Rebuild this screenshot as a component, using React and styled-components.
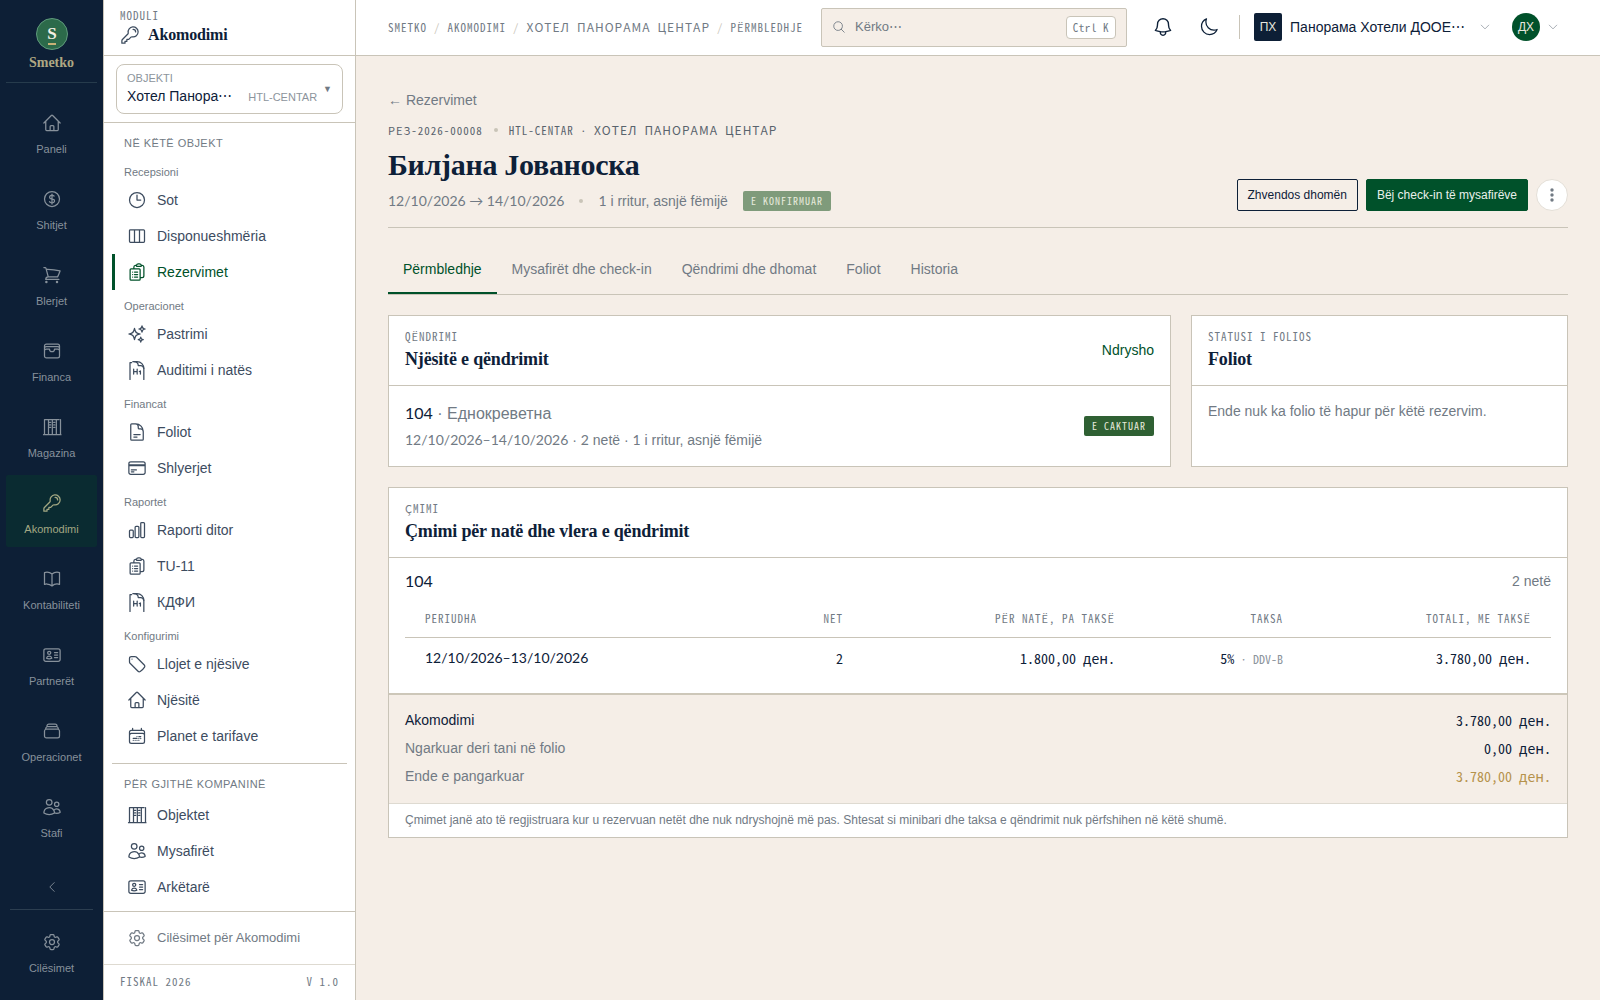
import React, { useState } from 'react';
import styled, { createGlobalStyle, css } from 'styled-components';
import {
  HiOutlineHome,
  HiOutlineCurrencyDollar,
  HiOutlineShoppingCart,
  HiOutlineWallet,
  HiOutlineKey,
  HiOutlineBookOpen,
  HiOutlineIdentification,
  HiOutlineRectangleStack,
  HiOutlineUsers,
  HiOutlineCog6Tooth,
  HiOutlineClock,
  HiOutlineViewColumns,
  HiOutlineClipboardDocumentList,
  HiOutlineSparkles,
  HiOutlineDocumentText,
  HiOutlineCreditCard,
  HiOutlineChartBar,
  HiOutlineTag,
  HiOutlineCalendarDateRange,
  HiOutlineBell,
  HiOutlineMoon,
  HiOutlineMagnifyingGlass,
  HiOutlineChevronDown,
  HiOutlineChevronLeft,
} from 'react-icons/hi2';

const sans = "'Liberation Sans', Arial, sans-serif";
const digits = "Lato, 'Liberation Sans', Arial, sans-serif";
const serif = "'Liberation Serif', 'Times New Roman', serif";
const mono = "'Noto Sans Mono CJK JP', 'Liberation Mono', monospace";

const color = {
  navy: '#0d2038',
  slate: '#3d4c5f',
  grey: '#717a84',
  pale: '#8c949c',
  line: '#c9c4b8',
  sand: '#f5eee7',
  green: '#00512a',
  gold: '#b5924c',
};

const GlobalStyle = createGlobalStyle`
  * {
    box-sizing: border-box;
  }

  body {
    margin: 0;
    background: ${color.sand};
    color: ${color.navy};
    font-family: ${sans};
    font-size: 14px;
    line-height: 20px;
  }

  h1, h2, p {
    margin: 0;
  }

  a {
    color: inherit;
    text-decoration: none;
  }

  button, input {
    font: inherit;
    color: inherit;
  }

  svg {
    display: block;
    flex: none;
  }
`;

// LAYOUT //
const Shell = styled.div`
  display: grid;
  grid-template-columns: 104px 252px 1fr;
  height: 100vh;
`;

const Overline = styled.div`
  font-family: ${mono};
  font-size: 11px;
  line-height: 16px;
  letter-spacing: 1px;
  text-transform: uppercase;
  color: ${color.grey};
`;

const Num = styled.span`
  font-family: ${digits};
  line-height: 16px;
`;

// RAIL //
const Rail = styled.nav`
  display: flex;
  flex-direction: column;
  background: #0d1f36;
  border-right: 1px solid ${color.line};
  padding: 0 6px;
  overflow: hidden;
`;

const Brand = styled.a`
  display: flex;
  flex-direction: column;
  align-items: center;
  gap: 3px;
  height: 83px;
  padding-top: 18px;
  border-bottom: 1px solid #263b4c;
  font: bold 14px/20px ${serif};
  color: #aea783;
`;

const RailList = styled.div`
  display: flex;
  flex-direction: column;
  gap: 4px;
  padding-top: 12px;
`;

const RailLink = styled.a`
  display: flex;
  flex-direction: column;
  align-items: center;
  gap: 8px;
  height: 72px;
  padding-top: 18px;
  font-size: 11px;
  line-height: 16px;
  border-radius: 2px;
  color: ${p => (p.$active ? '#a3a883' : '#87919b')};
  background: ${p => (p.$active ? '#0a2b31' : 'transparent')};
`;

const RailEnd = styled.div`
  margin: auto 4px 14px;
`;

const Collapse = styled.button`
  display: flex;
  justify-content: center;
  width: 100%;
  margin-bottom: 4px;
  padding: 0 0 15px;
  border: 0;
  border-bottom: 1px solid #2c3e50;
  background: none;
  color: #87919b;
`;

// SIDEBAR //
const Side = styled.aside`
  display: flex;
  flex-direction: column;
  min-height: 0;
  background: #fff;
  border-right: 1px solid ${color.line};
`;

const SideHead = styled.div`
  height: 56px;
  padding: 7px 16px 0;
  border-bottom: 1px solid ${color.line};
`;

const SideTitle = styled.div`
  display: flex;
  align-items: center;
  gap: 8px;
  font: bold 16px/24px ${serif};
  letter-spacing: -0.01em;
  color: ${color.navy};

  svg {
    color: ${color.slate};
  }
`;

const PropertyWrap = styled.div`
  padding: 8px 12px;
  border-bottom: 1px solid ${color.line};
`;

const PropertyButton = styled.button`
  display: flex;
  align-items: center;
  width: 100%;
  height: 50px;
  padding: 0 10px;
  border: 1px solid ${color.line};
  border-radius: 8px;
  background: #fff;
  text-align: left;
`;

const PropertyText = styled.span`
  display: grid;
  grid-template-columns: 1fr auto;
  flex: 1;
  align-items: baseline;
  padding-bottom: 2px;
  line-height: 20px;
`;

const PropertyLabel = styled.span`
  grid-column: 1 / -1;
  font-size: 11px;
  line-height: 16px;
  color: ${color.pale};
`;

const PropertyCode = styled.span`
  font-size: 11px;
  color: ${color.pale};
`;

const Caret = styled.span`
  margin-left: 6px;
  font-size: 9px;
  line-height: 12px;
  color: ${color.grey};
`;

const SideNav = styled.nav`
  flex: 1;
  min-height: 0;
  overflow: hidden;
  padding: 0 8px;
`;

const Heading = styled.div`
  padding: 12px 12px 5px;
  font-size: 11px;
  line-height: 16px;
  letter-spacing: 0.04em;
  text-transform: uppercase;
  color: ${color.grey};
`;

const GroupLabel = styled.div`
  padding: 8px 12px 2px;
  font-size: 11px;
  line-height: 16px;
  color: ${color.grey};
`;

const SideLink = styled.a`
  display: flex;
  align-items: center;
  gap: 10px;
  height: 36px;
  padding-left: 12px;
  border-left: 3px solid ${p => (p.$active ? color.green : 'transparent')};
  font-size: ${p => (p.$muted ? 13 : 14)}px;
  color: ${p => (p.$active ? color.green : p.$muted ? color.grey : color.slate)};
`;

const Divider = styled.hr`
  height: 1px;
  margin: 9px 0 0;
  border: 0;
  background: ${color.line};
`;

const SideSettings = styled.div`
  padding: 8px;
  border-top: 1px solid ${color.line};
`;

const SideFoot = styled(Overline)`
  display: flex;
  justify-content: space-between;
  padding: 8px 16px 11px;
  border-top: 1px solid #dedad1;
`;

// TOPBAR //
const Page = styled.div`
  display: flex;
  flex-direction: column;
  min-width: 0;
`;

const Topbar = styled.header`
  display: flex;
  align-items: center;
  height: 56px;
  padding: 0 41px 1px 32px;
  background: #fff;
  border-bottom: 1px solid ${color.line};
`;

const Crumbs = styled(Overline)`
  display: flex;
  gap: 7px;
  margin-right: 18px;
  white-space: nowrap;

  i {
    font-style: normal;
    color: ${color.line};
  }
`;

const Cyr = styled.span`
  font-size: 12px;
`;

const Search = styled.label`
  display: flex;
  flex: 1;
  align-items: center;
  gap: 9px;
  min-width: 0;
  height: 39px;
  margin-right: 18px;
  padding: 0 10px;
  border: 1px solid ${color.line};
  border-radius: 2px;
  background: ${color.sand};
  color: ${color.grey};

  input {
    flex: 1;
    min-width: 0;
    padding: 0;
    border: 0;
    outline: 0;
    background: none;
    font-size: 13px;
  }

  input::placeholder {
    color: ${color.grey};
  }

  kbd {
    height: 23px;
    padding: 0 6px;
    border: 1px solid ${color.line};
    border-radius: 4px;
    background: #fff;
    font: 11px/20px ${mono};
    letter-spacing: 0.05em;
  }
`;

const IconButton = styled.button`
  display: grid;
  place-items: center;
  width: 36px;
  height: 36px;
  margin-right: 10px;
  padding: 0;
  border: 0;
  background: none;
  color: ${color.navy};
`;

const Separator = styled.span`
  width: 1px;
  height: 24px;
  margin: 0 14px 0 2px;
  background: ${color.line};
`;

const Account = styled.button`
  display: flex;
  align-items: center;
  padding: 0;
  border: 0;
  background: none;
  white-space: nowrap;

  & + & {
    margin-left: 21px;
  }

  svg {
    color: ${color.pale};
  }
`;

const Initials = styled.span`
  width: 28px;
  height: 28px;
  margin-right: ${p => (p.$round ? 7 : 8)}px;
  border-radius: ${p => (p.$round ? '50%' : '2px')};
  background: ${p => (p.$round ? color.green : '#0d1f36')};
  color: #e8e6df;
  font-size: 12px;
  line-height: 28px;
  text-align: center;
`;

const AccountName = styled.span`
  margin-right: 14px;
`;

// RESERVATION //
const Main = styled.main`
  flex: 1;
  padding: 34px 32px 32px;
`;

const BackLink = styled.a`
  color: ${color.grey};
`;

const PageHead = styled.div`
  display: flex;
  align-items: flex-end;
  justify-content: space-between;
  margin-top: 12px;
  padding-bottom: 16px;
  border-bottom: 1px solid ${color.line};
`;

const Reference = styled(Overline)`
  display: flex;
  align-items: center;
  gap: 11px;
  color: #59636d;
`;

const Dot = styled.span`
  width: 4px;
  height: 4px;
  border-radius: 50%;
  background: ${color.line};
`;

const Guest = styled.h1`
  margin: 9px 0 8px;
  font: bold 30px/36px ${serif};
  letter-spacing: -0.01em;
`;

const Meta = styled.div`
  display: flex;
  align-items: center;
  gap: 15px;
  color: ${color.grey};
`;

const Badge = styled.span`
  padding: 0 8px;
  border-radius: 2px;
  background: ${p => (p.$solid ? '#2f6033' : '#7f9b7b')};
  color: #e6eadb;
  font: 10px/20px ${mono};
  letter-spacing: 1px;
  text-transform: uppercase;
`;

const Actions = styled.div`
  display: flex;
  gap: 8px;
`;

const Button = styled.button`
  height: 32px;
  padding: 0 10px;
  border: 1px solid ${p => (p.$primary ? color.green : color.navy)};
  border-radius: 2px;
  background: ${p => (p.$primary ? color.green : 'transparent')};
  color: ${p => (p.$primary ? '#e9f0ea' : color.navy)};
  font-size: 12px;
`;

const MoreButton = styled.button`
  display: grid;
  place-items: center;
  width: 32px;
  height: 32px;
  padding: 0;
  border: 1px solid #e4dfd7;
  border-radius: 50%;
  background: #fff;
  color: ${color.grey};
`;

const Tabs = styled.div`
  display: flex;
  margin: 18px 0 20px;
  border-bottom: 1px solid ${color.line};
`;

const Tab = styled.button`
  padding: 13px 15px;
  border: 0;
  border-bottom: 2px solid ${p => (p.$active ? color.green : 'transparent')};
  background: none;
  color: ${p => (p.$active ? color.green : color.grey)};
`;

const Columns = styled.div`
  display: grid;
  grid-template-columns: 27fr 13fr;
  gap: 20px;
  margin-bottom: 20px;
`;

const Card = styled.section`
  border: 1px solid ${color.line};
  background: #fff;
`;

const CardHead = styled.div`
  display: flex;
  align-items: center;
  justify-content: space-between;
  padding: 12px 16px 14px;
  border-bottom: 1px solid ${color.line};

  a {
    color: ${color.green};
  }
`;

const CardTitle = styled.h2`
  margin-top: 3px;
  font: bold 18px/24px ${serif};
  letter-spacing: -0.01em;
`;

const CardBody = styled.div`
  display: flex;
  align-items: center;
  justify-content: space-between;
  padding: 16px;
  color: ${color.grey};
`;

const EmptyText = styled.p`
  padding: 15px 16px;
  color: ${color.grey};
`;

const UnitName = styled.p`
  margin-bottom: 4px;
  font-size: 16px;
  line-height: 24px;

  b {
    font-family: ${digits};
    font-weight: normal;
    line-height: 16px;
    color: ${color.navy};
  }
`;

const UnitRow = styled.div`
  display: flex;
  justify-content: space-between;
  align-items: center;
  padding: 11px 16px 0;
  font-family: ${digits};
  font-size: 16px;
  line-height: 24px;

  span {
    font-family: ${sans};
    font-size: 14px;
    color: ${color.grey};
  }
`;

const TableWrap = styled.div`
  padding: 9px 16px 12px;
`;

const Table = styled.table`
  width: 100%;
  border-collapse: collapse;
  table-layout: fixed;

  th {
    height: 35px;
    padding: 0 20px 3px;
    border-bottom: 1px solid ${color.line};
    font: 11px/16px ${mono};
    letter-spacing: 1px;
    text-transform: uppercase;
    text-align: left;
    color: ${color.grey};
  }

  td {
    height: 44px;
    padding: 0 20px 2px;
    font-family: ${digits};
  }
`;

const numeric = css`
  && {
    text-align: right;
  }
`;

const NumHead = styled.th`
  ${numeric}
  width: ${p => p.$width}px;
`;

const NumCell = styled.td`
  ${numeric}

  && {
    font-family: ${mono};
  }

  small {
    font-size: 12px;
    color: ${color.pale};
  }
`;

const Totals = styled.div`
  padding: 11px 16px 13px;
  border-top: 2px solid #cdc7b9;
  background: ${color.sand};
`;

const TotalRow = styled.div`
  display: flex;
  justify-content: space-between;
  line-height: 28px;
  color: ${p => (p.$muted ? color.grey : color.navy)};

  span:last-child {
    font-family: ${mono};
    color: ${p => (p.$due ? color.gold : color.navy)};
  }
`;

const Note = styled.p`
  padding: 6px 16px 7px;
  border-top: 1px solid #dedad1;
  font-size: 12px;
  color: ${color.grey};
`;

// ICONS //
const Drawing = ({ size = 20, children }) => (
  <svg width={size} height={size} viewBox="0 0 24 24" fill="none" stroke="currentColor" strokeWidth="1.5" strokeLinecap="round" strokeLinejoin="round" aria-hidden="true">
    {children}
  </svg>
);

const WarehouseIcon = ({ size }) => (
  <Drawing size={size}>
    <path d="M1.800 21.200h21M3 3v18M7.800 3v18M12.400 3v18M17.200 3v18M22.200 3v18M3 3h17.500" />
    <path d="M9 6.500h1.500M9 9.500h1.500M9 12.500h1.500M14 6.500h1.500M14 9.500h1.500M14 12.500h1.500" />
  </Drawing>
);

const AuditIcon = ({ size }) => (
  <Drawing size={size}>
    <path d="M3.600 23.500V3.200M5.500 3.200H4.200M7 2h5c4.800 0 8.200 3.600 8.200 8.500v13" />
    <path d="M8.500 2c3.500.3 5 1.600 5 4.700h3c2 0 3.200 1.300 3.700 3.300" />
    <path d="M8 10.800v6M12.200 10.800v6M8 13.800h4.200M14.800 13.800l1.300-.6v3.600" />
  </Drawing>
);

const Logo = () => (
  <svg width="32" height="32" viewBox="0 0 32 32" aria-hidden="true">
    <circle cx="16" cy="16" r="15.500" fill="#2c6a4a" stroke="#5f9a7c" />
    <text x="16" y="21" textAnchor="middle" fontFamily="Liberation Serif, serif" fontWeight="bold" fontSize="17" fill="#f3efe4">S</text>
    <path d="M12 26h8" stroke="#c9b277" strokeWidth="2" />
  </svg>
);

const MoreIcon = () => (
  <svg width="16" height="16" viewBox="0 0 16 16" fill="currentColor" aria-hidden="true">
    <circle cx="8" cy="3" r="1.700" />
    <circle cx="8" cy="8" r="1.700" />
    <circle cx="8" cy="13" r="1.700" />
  </svg>
);

// DATA //
const modules = [
  ['Paneli', HiOutlineHome],
  ['Shitjet', HiOutlineCurrencyDollar],
  ['Blerjet', HiOutlineShoppingCart],
  ['Financa', HiOutlineWallet],
  ['Magazina', WarehouseIcon],
  ['Akomodimi', HiOutlineKey],
  ['Kontabiliteti', HiOutlineBookOpen],
  ['Partnerët', HiOutlineIdentification],
  ['Operacionet', HiOutlineRectangleStack],
  ['Stafi', HiOutlineUsers],
];

const groups = [
  ['Recepsioni', [
    ['Sot', HiOutlineClock],
    ['Disponueshmëria', HiOutlineViewColumns],
    ['Rezervimet', HiOutlineClipboardDocumentList],
  ]],
  ['Operacionet', [
    ['Pastrimi', HiOutlineSparkles],
    ['Auditimi i natës', AuditIcon],
  ]],
  ['Financat', [
    ['Foliot', HiOutlineDocumentText],
    ['Shlyerjet', HiOutlineCreditCard],
  ]],
  ['Raportet', [
    ['Raporti ditor', HiOutlineChartBar],
    ['TU-11', HiOutlineClipboardDocumentList],
    ['КДФИ', AuditIcon],
  ]],
  ['Konfigurimi', [
    ['Llojet e njësive', HiOutlineTag],
    ['Njësitë', HiOutlineHome],
    ['Planet e tarifave', HiOutlineCalendarDateRange],
  ]],
];

const companyLinks = [
  ['Objektet', WarehouseIcon],
  ['Mysafirët', HiOutlineUsers],
  ['Arkëtarë', HiOutlineIdentification],
];

const tabs = ['Përmbledhje', 'Mysafirët dhe check-in', 'Qëndrimi dhe dhomat', 'Foliot', 'Historia'];

function App() {
  const [tab, setTab] = useState(tabs[0]);

  const sideLink = ([label, Icon]) => (
    <SideLink key={label} href="#" $active={label === 'Rezervimet'}>
      <Icon size={20} />
      {label}
    </SideLink>
  );

  return (
    <Shell>
      <GlobalStyle />
      <Rail>
        <Brand href="#">
          <Logo />
          Smetko
        </Brand>
        <RailList>
          {modules.map(([label, Icon]) => (
            <RailLink key={label} href="#" $active={label === 'Akomodimi'}>
              <Icon size={20} />
              {label}
            </RailLink>
          ))}
        </RailList>
        <RailEnd>
          <Collapse aria-label="Mbyll menynë">
            <HiOutlineChevronLeft size={14} />
          </Collapse>
          <RailLink href="#">
            <HiOutlineCog6Tooth size={20} />
            Cilësimet
          </RailLink>
        </RailEnd>
      </Rail>

      <Side>
        <SideHead>
          <Overline>Moduli</Overline>
          <SideTitle>
            <HiOutlineKey size={20} />
            Akomodimi
          </SideTitle>
        </SideHead>
        <PropertyWrap>
          <PropertyButton>
            <PropertyText>
              <PropertyLabel>OBJEKTI</PropertyLabel>
              <span>Хотел Панора⋯</span>
              <PropertyCode>HTL-CENTAR</PropertyCode>
            </PropertyText>
            <Caret>▼</Caret>
          </PropertyButton>
        </PropertyWrap>
        <SideNav>
          <Heading>Në këtë objekt</Heading>
          {groups.map(([name, links]) => (
            <div key={name}>
              <GroupLabel>{name}</GroupLabel>
              {links.map(sideLink)}
            </div>
          ))}
          <Divider />
          <Heading>Për gjithë kompaninë</Heading>
          {companyLinks.map(sideLink)}
        </SideNav>
        <SideSettings>
          <SideLink href="#" $muted>
            <HiOutlineCog6Tooth size={20} />
            Cilësimet për Akomodimi
          </SideLink>
        </SideSettings>
        <SideFoot>
          <span>Fiskal 2026</span>
          <span>v 1.0</span>
        </SideFoot>
      </Side>

      <Page>
        <Topbar>
          <Crumbs as="nav">
            <a href="#">Smetko</a>
            <i>/</i>
            <a href="#">Akomodimi</a>
            <i>/</i>
            <Cyr>Хотел Панорама Центар</Cyr>
            <i>/</i>
            <span>Përmbledhje</span>
          </Crumbs>
          <Search>
            <HiOutlineMagnifyingGlass size={14} />
            <input type="text" placeholder="Kërko⋯" aria-label="Kërko" />
            <kbd>Ctrl K</kbd>
          </Search>
          <IconButton aria-label="Njoftimet">
            <HiOutlineBell size={22} />
          </IconButton>
          <IconButton aria-label="Tema">
            <HiOutlineMoon size={20} />
          </IconButton>
          <Separator />
          <Account>
            <Initials>ПХ</Initials>
            <AccountName>Панорама Хотели ДООЕ⋯</AccountName>
            <HiOutlineChevronDown size={12} />
          </Account>
          <Account>
            <Initials $round>ДХ</Initials>
            <HiOutlineChevronDown size={12} />
          </Account>
        </Topbar>

        <Main>
          <BackLink href="#">← Rezervimet</BackLink>
          <PageHead>
            <div>
              <Reference>
                <span>РЕЗ-2026-00008</span>
                <Dot />
                <span>HTL-CENTAR · <Cyr>Хотел Панорама Центар</Cyr></span>
              </Reference>
              <Guest>Билјана Јованоска</Guest>
              <Meta>
                <Num>12/10/2026 → 14/10/2026</Num>
                <Dot />
                <span><Num>1</Num> i rritur, asnjë fëmijë</span>
                <Badge>E konfirmuar</Badge>
              </Meta>
            </div>
            <Actions>
              <Button>Zhvendos dhomën</Button>
              <Button $primary>Bëj check-in të mysafirëve</Button>
              <MoreButton aria-label="Më shumë">
                <MoreIcon />
              </MoreButton>
            </Actions>
          </PageHead>

          <Tabs role="tablist">
            {tabs.map(name => (
              <Tab key={name} role="tab" aria-selected={name === tab} $active={name === tab} onClick={() => setTab(name)}>
                {name}
              </Tab>
            ))}
          </Tabs>

          <Columns>
            <Card>
              <CardHead>
                <div>
                  <Overline>Qëndrimi</Overline>
                  <CardTitle>Njësitë e qëndrimit</CardTitle>
                </div>
                <a href="#">Ndrysho</a>
              </CardHead>
              <CardBody>
                <div>
                  <UnitName><b>104</b> · Еднокреветна</UnitName>
                  <p><Num>12/10/2026–14/10/2026</Num> · <Num>2</Num> netë · <Num>1</Num> i rritur, asnjë fëmijë</p>
                </div>
                <Badge $solid>E caktuar</Badge>
              </CardBody>
            </Card>
            <Card>
              <CardHead>
                <div>
                  <Overline>Statusi i folios</Overline>
                  <CardTitle>Foliot</CardTitle>
                </div>
              </CardHead>
              <EmptyText>Ende nuk ka folio të hapur për këtë rezervim.</EmptyText>
            </Card>
          </Columns>

          <Card>
            <CardHead>
              <div>
                <Overline>Çmimi</Overline>
                <CardTitle>Çmimi për natë dhe vlera e qëndrimit</CardTitle>
              </div>
            </CardHead>
            <UnitRow>
              104
              <span>2 netë</span>
            </UnitRow>
            <TableWrap>
              <Table>
                <thead>
                  <tr>
                    <th>Periudha</th>
                    <NumHead $width={80}>Net</NumHead>
                    <NumHead $width={272}>Për natë, pa taksë</NumHead>
                    <NumHead $width={168}>Taksa</NumHead>
                    <NumHead $width={248}>Totali, me taksë</NumHead>
                  </tr>
                </thead>
                <tbody>
                  <tr>
                    <td>12/10/2026–13/10/2026</td>
                    <NumCell>2</NumCell>
                    <NumCell>1.800,00 ден.</NumCell>
                    <NumCell>5%<small> · DDV-B</small></NumCell>
                    <NumCell>3.780,00 ден.</NumCell>
                  </tr>
                </tbody>
              </Table>
            </TableWrap>
            <Totals>
              <TotalRow>
                <span>Akomodimi</span>
                <span>3.780,00 ден.</span>
              </TotalRow>
              <TotalRow $muted>
                <span>Ngarkuar deri tani në folio</span>
                <span>0,00 ден.</span>
              </TotalRow>
              <TotalRow $muted $due>
                <span>Ende e pangarkuar</span>
                <span>3.780,00 ден.</span>
              </TotalRow>
            </Totals>
            <Note>Çmimet janë ato të regjistruara kur u rezervuan netët dhe nuk ndryshojnë më pas. Shtesat si minibari dhe taksa e qëndrimit nuk përfshihen në këtë shumë.</Note>
          </Card>
        </Main>
      </Page>
    </Shell>
  );
}

export default App;
